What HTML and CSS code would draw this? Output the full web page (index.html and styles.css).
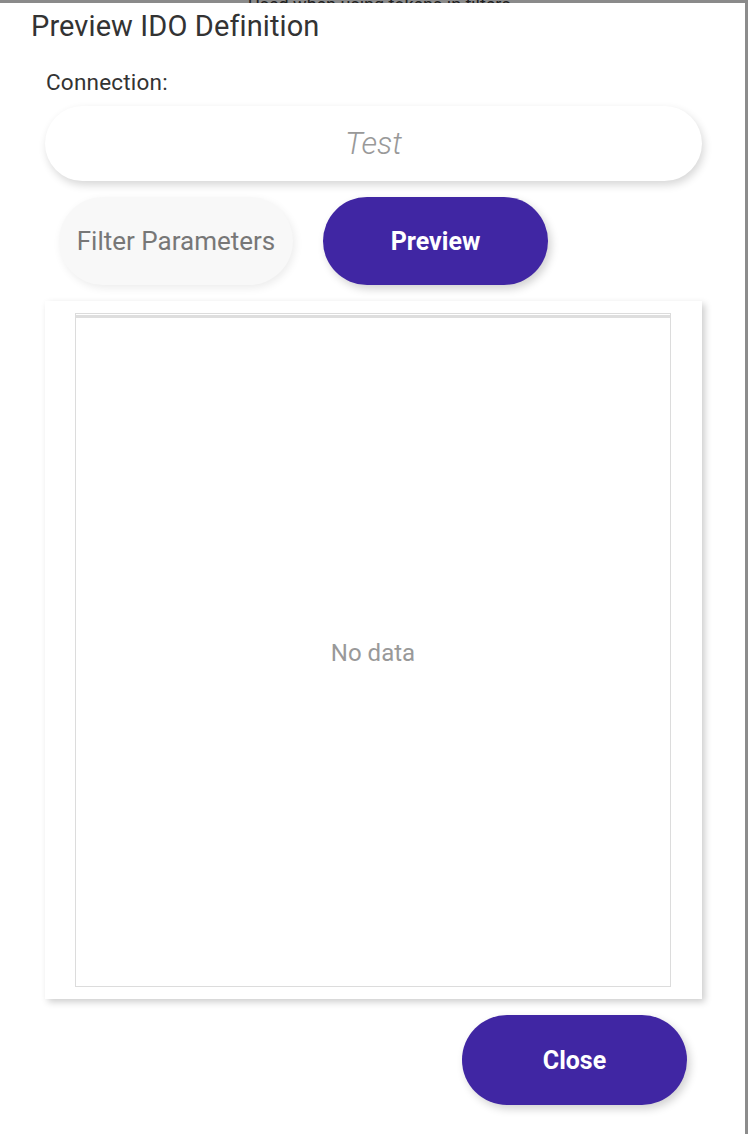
FILE: index.html
```html
<!DOCTYPE html>
<html>
<head>
<meta charset="utf-8">
<link rel="stylesheet" href="styles.css">
</head>
<body>
<div class="backdrop"><span class="backdrop-text">Used when using tokens in filters</span></div>
<div class="dialog">
  <h1 class="title">Preview IDO Definition</h1>
  <div class="label">Connection:</div>
  <div class="conn-input">Test</div>
  <div class="actions">
    <button class="btn btn-light">Filter Parameters</button>
    <button class="btn btn-primary">Preview</button>
  </div>
  <div class="panel">
    <div class="grid">
      <div class="grid-header"></div>
      <div class="grid-body">No data</div>
    </div>
  </div>
  <div class="footer">
    <button class="btn btn-primary btn-close">Close</button>
  </div>
</div>
</body>
</html>
```
FILE: styles.css
```css
html, body {
  margin: 0;
  padding: 0;
}
body {
  width: 748px;
  height: 1134px;
  background: #8c8c8c;
  overflow: hidden;
  font-family: Roboto, "Noto Sans", sans-serif;
}
.backdrop {
  height: 3px;
  overflow: hidden;
  background: #8a8a8a;
  padding-left: 248px;
}
.backdrop-text {
  display: block;
  font-size: 18px;
  line-height: 18px;
  margin-top: -4px;
  color: #222;
}
.dialog {
  width: 745px;
  height: 1131px;
  background: #fff;
  box-sizing: border-box;
  padding-top: 7px;
}
.title {
  margin: 0;
  padding-left: 31px;
  font-size: 29px;
  line-height: 32px;
  font-weight: 400;
  color: #333;
  letter-spacing: 0.1px;
}
.label {
  margin-top: 27px;
  padding-left: 46px;
  font-size: 22.5px;
  line-height: 26px;
  color: #333;
  letter-spacing: 0.2px;
}
.conn-input {
  margin: 11px 0 0 45px;
  width: 657px;
  height: 75px;
  border-radius: 38px;
  background: #fff;
  box-shadow: 2px 4px 8px rgba(0, 0, 0, 0.16);
  display: flex;
  align-items: center;
  justify-content: center;
  font-size: 31px;
  font-style: italic;
  font-weight: 300;
  color: #999;
}
.actions {
  display: flex;
  gap: 30px;
  margin: 16px 0 0 59px;
}
.btn {
  border: none;
  font-family: inherit;
  height: 88px;
  border-radius: 44px;
  font-size: 26px;
  padding: 0;
  cursor: pointer;
}
.btn-light {
  width: 234px;
  background: #f8f8f8;
  color: #777;
  box-shadow: 2px 3px 8px rgba(0, 0, 0, 0.08);
}
.btn-primary {
  width: 225px;
  background: #4026a3;
  color: #fff;
  font-weight: 700;
  font-size: 25px;
  box-shadow: 3px 4px 9px rgba(0, 0, 0, 0.18);
}
.panel {
  margin: 16px 0 0 45px;
  width: 657px;
  height: 698px;
  box-sizing: border-box;
  padding: 12px 31px 12px 30px;
  background: #fff;
  box-shadow: 3px 3px 7px rgba(0, 0, 0, 0.2);
}
.grid {
  height: 100%;
  box-sizing: border-box;
  border: 1px solid #dcdcdc;
  display: flex;
  flex-direction: column;
}
.grid-header {
  height: 1px;
  border-bottom: 3px solid #dedede;
}
.grid-body {
  flex: 1;
  display: flex;
  align-items: center;
  justify-content: center;
  font-size: 24px;
  color: #999;
  padding-top: 2px;
}
.footer {
  display: flex;
  justify-content: flex-end;
  padding-right: 58px;
  margin-top: 16px;
}
.btn-close {
  height: 90px;
  border-radius: 45px;
}
```
